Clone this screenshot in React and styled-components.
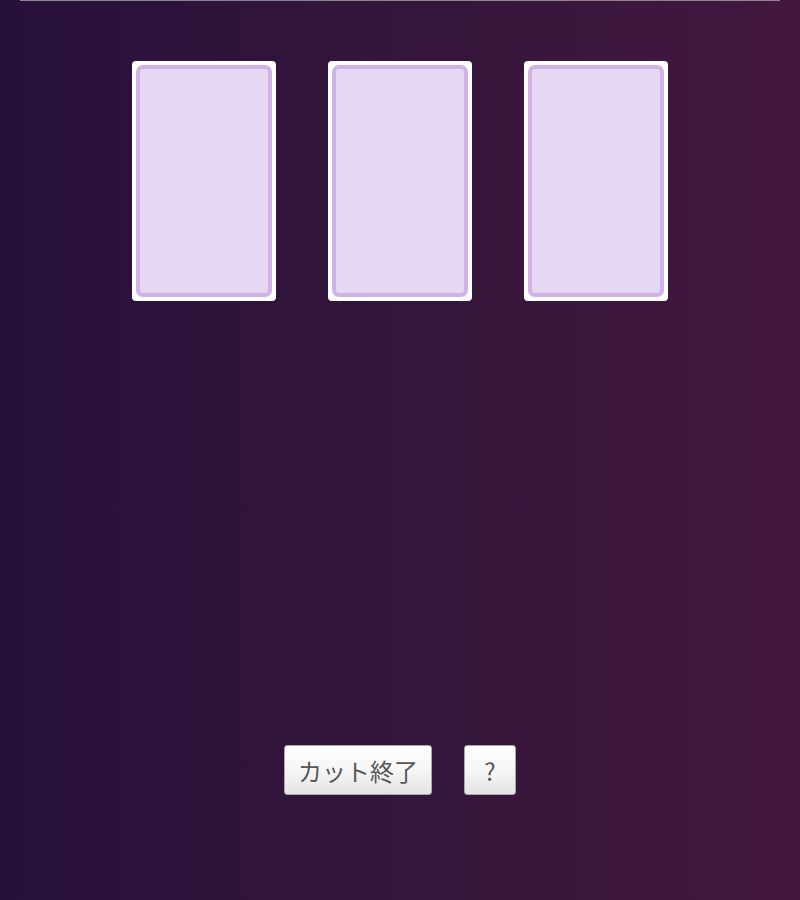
import React from 'react'
import styled, { createGlobalStyle } from 'styled-components'

const GlobalStyle = createGlobalStyle`
    html, body {
        margin: 0;
        padding: 0;
    }
    body {
        font-family: "Noto Sans CJK JP", "Noto Sans", sans-serif;
        background: #2a1339;
    }
`;

const Table = styled.div`
    box-sizing: border-box;
    width: 800px;
    height: 900px;
    padding: 0 20px;
    display: flex;
    flex-direction: column;
    background: linear-gradient(to right, #27113a 0%, #34153b 50%, #43183f 100%);
`;

const TopRule = styled.div`
    height: 1px;
    background: #8a8690;
`;

const CardRow = styled.div`
    display: flex;
    justify-content: center;
    gap: 52px;
    margin-top: 60px;
`;

const Card = styled.div`
    box-sizing: border-box;
    width: 144px;
    height: 240px;
    padding: 4px;
    background: #ffffff;
    border-radius: 4px;
`;

const CardFace = styled.div`
    box-sizing: border-box;
    width: 100%;
    height: 100%;
    background: #e6d8f2;
    border: 4px solid #d1b2e6;
    border-radius: 7px;
`;

const Controls = styled.div`
    display: flex;
    justify-content: center;
    gap: 32px;
    margin-top: 444px;
`;

const Button = styled.button`
    box-sizing: border-box;
    width: ${props => props.$width}px;
    height: 50px;
    padding: 0;
    font-family: "Noto Sans CJK JP", "Noto Sans", sans-serif;
    font-size: 24px;
    color: #575757;
    background: linear-gradient(to bottom, #ffffff 0%, #f6f6f6 50%, #e4e4e4 100%);
    border: 1px solid #a8a8a8;
    border-radius: 3px;
    cursor: pointer;
`;

const App = () => {
    const cards = [0, 1, 2];

    return (
        <>
            <GlobalStyle />
            <Table>
                <TopRule />
                <CardRow>
                    {cards.map(i => (
                        <Card key={i}>
                            <CardFace />
                        </Card>
                    ))}
                </CardRow>
                <Controls>
                    <Button $width={148}>カット終了</Button>
                    <Button $width={52}>?</Button>
                </Controls>
            </Table>
        </>
    )
}

export default App;
